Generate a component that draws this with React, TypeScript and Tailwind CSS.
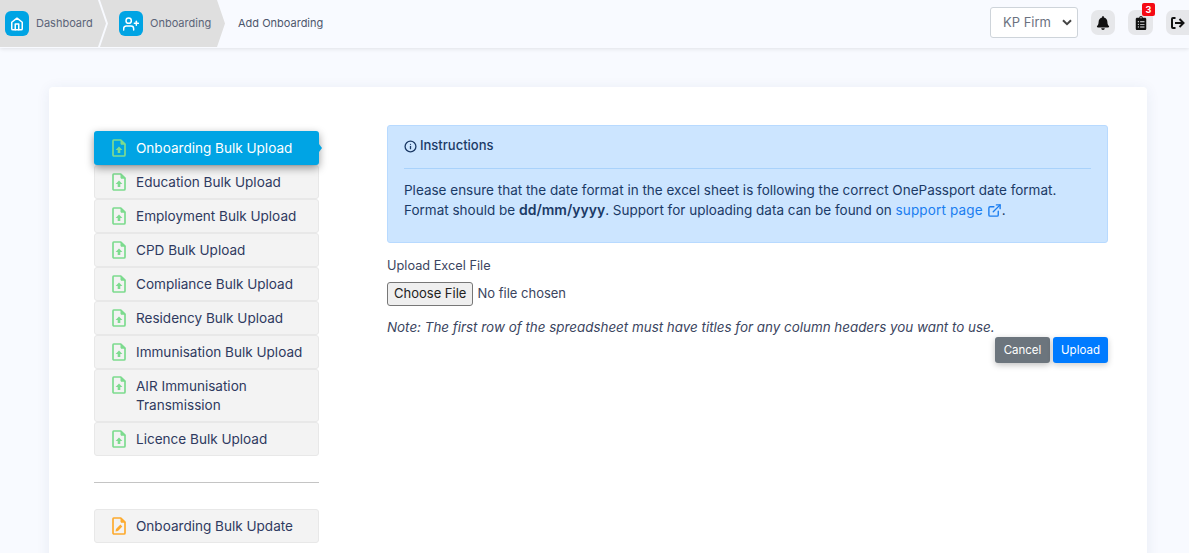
import React from "react";
import { FaBell, FaClipboardList } from "react-icons/fa";
import { FiHome, FiUserPlus, FiInfo, FiExternalLink } from "react-icons/fi";

const font = "font-['Inter','Noto_Sans',sans-serif]";

function FileIcon({ kind }: { kind: "up" | "edit" }) {
  const c = kind === "up" ? "#7ddb8f" : "#fdab2f";
  return (
    <svg width="14" height="18" viewBox="0 0 14 18" className="shrink-0">
      <path d="M1.8 1h7l4.2 4.2V16a1 1 0 0 1-1 1H2a1 1 0 0 1-1-1V2a1 1 0 0 1 .8-1z" fill="none" stroke={c} strokeWidth="1.7" strokeLinejoin="round" />
      <path d="M9 1v4.2h4z" fill={c} stroke={c} strokeWidth="1" strokeLinejoin="round" />
      {kind === "up" ? (
        <path d="M7 7.4 10.4 11H8.3v3H5.7v-3H3.6z" fill={c} />
      ) : (
        <path d="M3.5 14.5 4 12l4.4-4.4 1.9 1.9L6 13.9z" fill={c} />
      )}
    </svg>
  );
}

function Item({ label, active, kind = "up", tall }: { label: string; active?: boolean; kind?: "up" | "edit"; tall?: boolean }) {
  if (active) {
    return (
      <div className="relative h-[34px] flex items-center gap-[10px] pl-[18px] rounded-[3px] bg-[#00a4e4] text-white shadow-[0_3px_8px_rgba(0,0,0,0.4)] z-10">
        <FileIcon kind={kind} />
        <span className="text-[13.55px]">{label}</span>
        <span className="absolute right-[-3px] top-[13px] w-0 h-0 border-y-[4px] border-y-transparent border-l-[3px] border-l-[#00a4e4]" />
      </div>
    );
  }
  return (
    <div className={`flex items-center gap-[10px] pl-[17px] pr-2 rounded-[3px] bg-[#f3f3f3] border border-[#e8e8e8] text-[#2f3a5f] ${tall ? "h-[53px]" : "h-[34px]"}`}>
      <div className={tall ? "self-start pt-[6px]" : ""}><FileIcon kind={kind} /></div>
      <span className="text-[13.55px] leading-[19px]">{label}</span>
    </div>
  );
}

function Crumb({ icon, label, first }: { icon: React.ReactNode; label: string; first?: boolean }) {
  return (
    <div
      className={`h-[47px] flex items-center bg-[#dfdfdf] ${first ? "w-[106px] pl-[5px] [clip-path:polygon(0_0,98px_0,106px_50%,98px_100%,0_100%)]" : "w-[125px] pl-[19px] -ml-[6px] [clip-path:polygon(0_0,117px_0,125px_50%,117px_100%,0_100%,8px_50%)]"}`}
    >
      <span className="w-6 h-[25px] rounded-[6px] bg-[#00a4e4] text-white flex items-center justify-center">{icon}</span>
      <span className="ml-[7px] text-[11px] text-[#5b6478]">{label}</span>
    </div>
  );
}

function IconBtn({ children, badge, className = "w-6" }: { children: React.ReactNode; badge?: string; className?: string }) {
  return (
    <div className={`relative h-[25px] rounded-[7px] bg-[#e6e7ea] text-[#111] flex items-center justify-center ${className}`}>
      {children}
      {badge && (
        <span className="absolute -top-[7px] right-[-2px] w-[13px] h-[13px] bg-[#f50a14] rounded-[2px] text-white text-[9px] font-bold flex items-center justify-center">{badge}</span>
      )}
    </div>
  );
}

export default function App() {
  return (
    <div className={`${font} h-[553px] w-[1189px] overflow-hidden bg-[#f8faff] text-[#2f3a5f]`}>
      <header className="h-[48px] flex items-start justify-between bg-[#f8faff] shadow-[0_1px_4px_rgba(0,0,0,0.1)] relative z-10">
        <div className="flex items-center">
          <Crumb first icon={<FiHome size={14} strokeWidth={2.6} />} label="Dashboard" />
          <Crumb icon={<FiUserPlus size={16} strokeWidth={2.2} />} label="Onboarding" />
          <span className="ml-[13px] h-[47px] flex items-center text-[11px] text-[#4d566c]">Add Onboarding</span>
        </div>
        <div className="flex items-center h-[45px] overflow-hidden">
          <div className="w-[88px] h-[31px] rounded-[3px] border border-[#ced4da] bg-white flex items-center justify-between pl-[12px] pr-[5px] text-[13px] text-[#6b7280]">
            <span>KP Firm</span>
            <svg width="10" height="7" viewBox="0 0 10 7"><path d="M1 1.2 5 5.2 9 1.2" fill="none" stroke="#444" strokeWidth="2" /></svg>
          </div>
          <div className="ml-[13px] flex gap-[13px]">
            <IconBtn><FaBell size={14} /></IconBtn>
            <IconBtn badge="3" className="w-[25px]"><FaClipboardList size={14} /></IconBtn>
            <IconBtn className="w-[23px] rounded-r-none">
              <svg width="14" height="12" viewBox="0 0 14 12" fill="none" stroke="#111" strokeWidth="2">
                <path d="M4.5 1H2a1 1 0 0 0-1 1v8a1 1 0 0 0 1 1h2.5" />
                <path d="M4 6h8.5M8.5 2 12.5 6 8.5 10" />
              </svg>
            </IconBtn>
          </div>
        </div>
      </header>

      <main className="pt-[39px] pl-[49px]">
        <div className="w-[1098px] h-[520px] bg-white rounded-[4px] shadow-[0_2px_14px_rgba(40,60,120,0.08)] flex pl-[45px] pt-[38px]">
          <aside className="w-[225px] shrink-0 pt-[6px]">
            <div className="flex flex-col">
              <Item active label="Onboarding Bulk Upload" />
              <Item label="Education Bulk Upload" />
              <Item label="Employment Bulk Upload" />
              <Item label="CPD Bulk Upload" />
              <Item label="Compliance Bulk Upload" />
              <Item label="Residency Bulk Upload" />
              <Item label="Immunisation Bulk Upload" />
              <Item tall label="AIR Immunisation Transmission" />
              <Item label="Licence Bulk Upload" />
            </div>
            <div className="mt-[26px] mb-[26px] border-t border-[#c4c4c4]" />
            <Item kind="edit" label="Onboarding Bulk Update" />
          </aside>

          <section className="ml-[68px] w-[721px]">
            <div className="h-[118px] rounded-[3px] bg-[#cce5ff] border border-[#b8daff] px-[16px] text-[#1b3a66]">
              <div className="h-[43px] pb-[2px] flex items-center gap-[3px] border-b border-[#a9d2fb] text-[13px] font-medium">
                <FiInfo size={13} strokeWidth={2.4} />
                <span>Instructions</span>
              </div>
              <p className="mt-[11px] text-[13.5px] leading-[20px]">
                Please ensure that the date format in the excel sheet is following the correct OnePassport date format.<br />
                Format should be <b className="font-semibold text-[14px]">dd/mm/yyyy</b>. Support for uploading data can be found on{" "}
                <span className="text-[#1a7df0] tracking-[0.15px]">support page <FiExternalLink size={15} strokeWidth={2.2} className="inline -mt-[2px]" /></span>.
              </p>
            </div>
            <div className="mt-[14px] text-[12.75px] leading-[18px] text-[#3b4560]">Upload Excel File</div>
            <div className="mt-[6px] h-[25px] flex items-center">
              <input
                type="file"
                className="text-[13px] text-[#3b4560] file:mr-[4px] file:h-[24px] file:px-[6px] file:rounded-[3px] file:border file:border-[#777] file:bg-[#efefef] file:text-[#222] file:text-[13px]"
              />
            </div>
            <p className="mt-[12px] text-[13.4px] leading-[18px] italic text-[#3b4560]">
              Note: The first row of the spreadsheet must have titles for any column headers you want to use.
            </p>
            <div className="mt-[1px] flex justify-end gap-[3px]">
              <button className="w-[55px] h-[26px] pt-[1px] rounded-[3px] bg-[#6c757d] text-white text-[11.5px] shadow-[0_2px_6px_rgba(0,0,0,0.25)]">Cancel</button>
              <button className="w-[55px] h-[26px] pt-[1px] rounded-[3px] bg-[#007bff] text-white text-[11.5px] shadow-[0_2px_6px_rgba(0,0,0,0.2)]">Upload</button>
            </div>
          </section>
        </div>
      </main>
    </div>
  );
}
